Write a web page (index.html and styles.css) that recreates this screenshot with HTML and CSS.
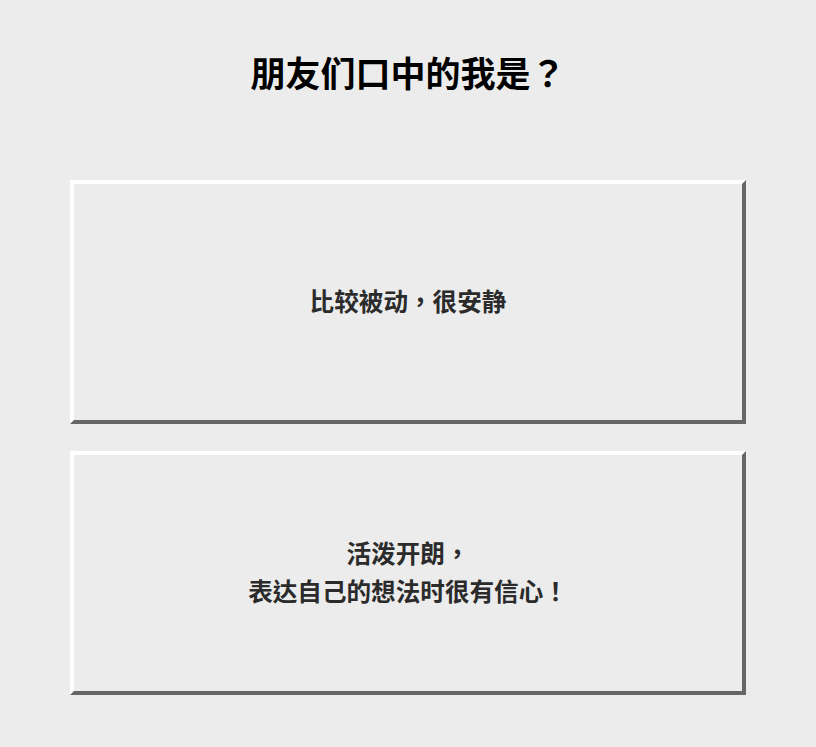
FILE: index.html
```html
<!DOCTYPE html>
<html>
<head>
  <meta charset="utf-8">
  <title>朋友们口中的我是？</title>
  <link rel="stylesheet" href="styles.css">
</head>
<body>
  <div id="quiz">
    <h1 class="pergunta">朋友们口中的我是？</h1>
    <div class="opcoes">
      <button class="opcao">比较被动，很安静</button>
      <button class="opcao">活泼开朗，<br>表达自己的想法时很有信心！</button>
    </div>
  </div>
</body>
</html>
```

FILE: styles.css
```css
body {
  margin: 0;
  background: #ececec;
  font-family: "Noto Sans CJK TC", "Noto Sans", sans-serif;
}
#quiz {
  padding: 50px 70px 0;
}
.pergunta {
  margin: 0 0 86px;
  text-align: center;
  font-size: 35px;
  line-height: 44px;
  font-weight: bold;
  color: #000;
}
.opcoes {
  display: flex;
  flex-direction: column;
  gap: 27px;
}
.opcao {
  height: 244px;
  padding: 0 0 5px;
  background: #ececec;
  border: 4px solid;
  border-color: #fff #666 #666 #fff;
  font-family: inherit;
  font-size: 24.6px;
  line-height: 38px;
  font-weight: bold;
  color: #2b2b2b;
  cursor: pointer;
}
```
